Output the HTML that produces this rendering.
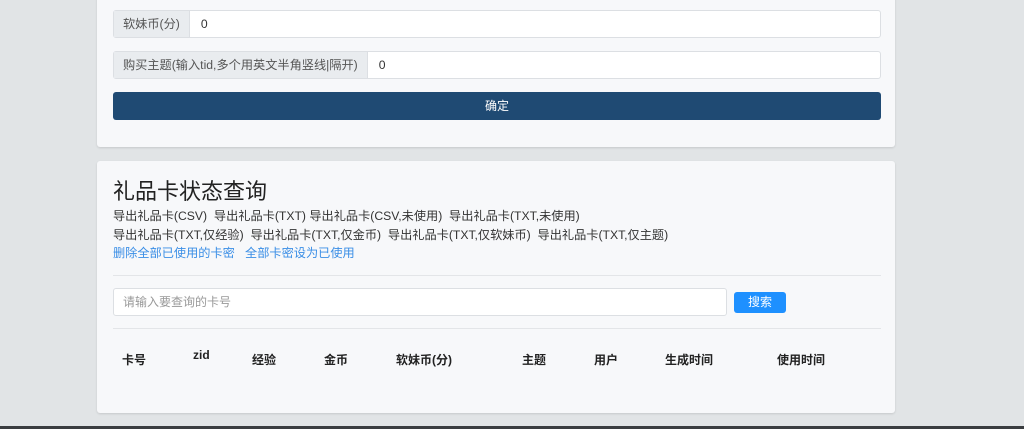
<!DOCTYPE html><html><head><meta charset="utf-8"><style>
*{margin:0;padding:0;box-sizing:border-box}
body{width:1024px;height:429px;background:#e1e4e6;font-family:"Liberation Sans","Noto Sans CJK SC",sans-serif;font-size:12px;color:#333;position:relative;overflow:hidden}
.card{position:absolute;left:97px;width:798px;background:#f7f8fa;border-radius:3px;box-shadow:0 1px 2px rgba(0,0,0,.12)}
.a{position:absolute;white-space:nowrap}
.grp{position:absolute;left:16px;width:768px;height:28px;border:1px solid #dcdfe3;border-radius:3px;background:#fff;display:flex;font-size:12.2px}
.grp .l{background:#e9ecef;border-right:1px solid #dcdfe3;padding:0 9px;line-height:26px;color:#555}
.grp .v{padding-left:11px;line-height:26px}
.lk{color:#333;font-size:12.2px;line-height:18.5px}
.bl{color:#3a8ee6}
</style></head><body>
<div class="card" style="top:-5px;height:152px">
<div class="grp" style="top:15px"><span class="l">软妹币(分)</span><span class="v">0</span></div>
<div class="grp" style="top:56px"><span class="l">购买主题(输入tid,多个用英文半角竖线|隔开)</span><span class="v">0</span></div>
<div class="a" style="top:97px;left:16px;width:768px;height:28px;background:#1f4a73;border-radius:3px;color:#fff;text-align:center;line-height:28px">确定</div>
</div>
<div class="card" style="top:161px;height:252px">
<div class="a" style="left:16px;top:13px;font-size:22px;color:#222">礼品卡状态查询</div>
<div class="a lk" style="left:16px;top:46px">导出礼品卡(CSV)&nbsp; 导出礼品卡(TXT) 导出礼品卡(CSV,未使用)&nbsp; 导出礼品卡(TXT,未使用)<br>导出礼品卡(TXT,仅经验)&nbsp; 导出礼品卡(TXT,仅金币)&nbsp; 导出礼品卡(TXT,仅软妹币)&nbsp; 导出礼品卡(TXT,仅主题)<br><span class="bl">删除全部已使用的卡密&nbsp;&nbsp; 全部卡密设为已使用</span></div>
<div class="a" style="left:16px;top:114px;width:768px;border-top:1px solid #e3e5e8"></div>
<div class="a" style="left:16px;top:127px;width:614px;height:28px;background:#fff;border:1px solid #dcdfe3;border-radius:3px;color:#999;line-height:26px;padding-left:9px">请输入要查询的卡号</div>
<div class="a" style="left:637px;top:131px;width:52px;height:21px;background:#1e90ff;border-radius:3px;color:#fff;text-align:center;line-height:21px">搜索</div>
<div class="a" style="left:16px;top:167px;width:768px;border-top:1px solid #e3e5e8"></div>
<div class="a" style="top:190px;left:0;width:798px;font-weight:bold;color:#222;font-size:12px">
<span class="a" style="left:25px">卡号</span><span class="a" style="left:96px;top:-3px">zid</span><span class="a" style="left:155px">经验</span><span class="a" style="left:227px">金币</span><span class="a" style="left:299px">软妹币(分)</span><span class="a" style="left:425px">主题</span><span class="a" style="left:497px">用户</span><span class="a" style="left:568px">生成时间</span><span class="a" style="left:680px">使用时间</span></div>
</div>
<div class="a" style="left:0;top:426px;width:1024px;height:3px;background:#3a3d40"></div>
</body></html>
